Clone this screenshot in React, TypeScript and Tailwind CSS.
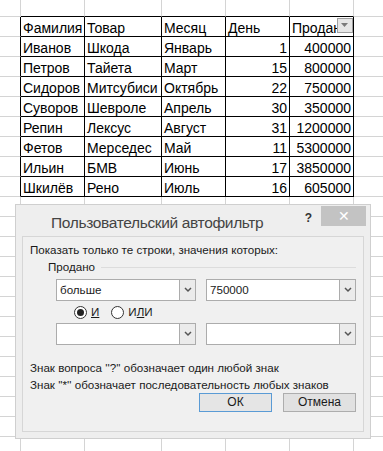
import React from "react";

const colWidths = [21, 64, 77, 64, 64, 64, 30];

const rows: string[][] = [
  ["Фамилия", "Товар", "Месяц", "День", "Продано"],
  ["Иванов", "Шкода", "Январь", "1", "400000"],
  ["Петров", "Тайета", "Март", "15", "800000"],
  ["Сидоров", "Митсубиси", "Октябрь", "22", "750000"],
  ["Суворов", "Шевроле", "Апрель", "30", "350000"],
  ["Репин", "Лексус", "Август", "31", "1200000"],
  ["Фетов", "Мерседес", "Май", "11", "5300000"],
  ["Ильин", "БМВ", "Июнь", "17", "3850000"],
  ["Шкилёв", "Рено", "Июль", "16", "605000"],
];

const ROW_COUNT = 23;
const inTableRow = (r: number) => r >= 1 && r <= 9;
const inTableCol = (c: number) => c >= 1 && c <= 5;

function Cell({ r, c }: { r: number; c: number }) {
  const rightBlack = inTableRow(r) && (inTableCol(c) || inTableCol(c + 1));
  const bottomBlack = inTableCol(c) && (inTableRow(r) || inTableRow(r + 1));
  const data = inTableRow(r) && inTableCol(c) ? rows[r - 1][c - 1] : "";
  const numeric = r > 1 && (c === 4 || c === 5);
  const isFilter = r === 1 && c === 5;

  return (
    <div
      className={`relative flex items-start overflow-hidden whitespace-nowrap border-r border-b px-[2px] pt-[4px] leading-[15px] ${
        rightBlack ? "border-r-black" : "border-r-[#d4d4d4]"
      } ${bottomBlack ? "border-b-black" : "border-b-[#d4d4d4]"} ${
        numeric ? "justify-end" : "justify-start"
      }`}
    >
      {data}
      {isFilter && (
        <div className="absolute right-0 top-[1px] flex h-[15px] w-[16px] items-center justify-center border border-[#a0a0a0] bg-[#e6e6e6]">
          <svg width="8" height="5" viewBox="0 0 8 5">
            <path d="M0 0 H7 L3.5 4 Z" fill="#7a7a7a" />
          </svg>
        </div>
      )}
    </div>
  );
}

function Combo({ value, width }: { value: string; width: string }) {
  return (
    <div className={`flex h-[22px] ${width} border border-[#acacac] bg-white`}>
      <div className="flex-1 truncate pl-[3px] leading-[20px]">{value}</div>
      <div className="flex w-[16px] items-center justify-center border-l border-[#acacac] bg-[#ebebeb]">
        <svg width="8" height="6" viewBox="0 0 8 6">
          <path d="M1 1 L4 4 L7 1" stroke="#555" strokeWidth="1.5" fill="none" />
        </svg>
      </div>
    </div>
  );
}

function Radio({ checked }: { checked: boolean }) {
  return (
    <span className="flex h-[13px] w-[13px] items-center justify-center rounded-full border border-[#333] bg-white">
      {checked && <span className="h-[7px] w-[7px] rounded-full bg-[#222]" />}
    </span>
  );
}

function AutoFilterDialog() {
  return (
    <div className="absolute left-[15px] top-[204px] flex h-[235px] w-[356px] flex-col border border-[#cfcfcf] bg-[#eeeeee] font-['Liberation_Sans',sans-serif] text-[11.6px] text-[#1a1a1a]">
      <div className="flex h-[31px] items-start">
        <div className="pl-[35px] pt-[6px] text-[15.5px] tracking-[-0.35px] text-[#444]">
          Пользовательский автофильтр
        </div>
        <div className="ml-auto pt-[4px] pr-[9px] text-[12px] font-bold text-[#333]">?</div>
        <div className="mr-[4px] mt-[1px] flex h-[20px] w-[45px] items-center justify-center bg-[#c3c3c3] text-[14px] text-white">
          ✕
        </div>
      </div>
      <div className="mx-[6px] mb-[6px] flex flex-1 flex-col border border-[#d6d6d6] bg-[#f0f0f0] px-[7px] pt-[5px]">
        <div className="leading-[16px]">Показать только те строки, значения которых:</div>
        <div className="mt-[1px] flex items-center pl-[18px] leading-[16px]">
          <span>Продано</span>
          <span className="ml-[6px] h-px flex-1 bg-[#dcdcdc]" />
        </div>
        <div className="mt-[4px] flex gap-[10px] pl-[26px]">
          <Combo value="больше" width="w-[141px]" />
          <Combo value="750000" width="w-[151px]" />
        </div>
        <div className="mt-[2px] flex h-[18px] items-center pl-[44px]">
          <Radio checked />
          <span className="ml-[4px]">
            <span className="underline">И</span>
          </span>
          <span className="ml-[12px]">
            <Radio checked={false} />
          </span>
          <span className="ml-[4px]">
            И<span className="underline">Л</span>И
          </span>
        </div>
        <div className="mt-[2px] flex gap-[10px] pl-[26px]">
          <Combo value="" width="w-[141px]" />
          <Combo value="" width="w-[151px]" />
        </div>
        <div className="mt-[15px] leading-[16px]">Знак вопроса ''?'' обозначает один любой знак</div>
        <div className="mt-[1px] leading-[16px]">Знак ''*'' обозначает последовательность любых знаков</div>
        <div className="mt-[0px] flex justify-end gap-[11px]">
          <button className="h-[19px] w-[73px] border border-[#5a9bd5] bg-[#e5e5e5] text-[12px] leading-[17px]">
            ОК
          </button>
          <button className="h-[19px] w-[73px] border border-[#adadad] bg-[#e1e1e1] text-[12px] leading-[17px]">
            Отмена
          </button>
        </div>
      </div>
    </div>
  );
}

export default function App() {
  return (
    <div className="relative h-[451px] w-[383px] overflow-hidden bg-white font-['Liberation_Sans',sans-serif] text-[14px] text-black">
      <div
        className="grid"
        style={{
          gridTemplateColumns: colWidths.map((w) => `${w}px`).join(" "),
          gridTemplateRows: `17px repeat(${ROW_COUNT - 1}, 20px)`,
        }}
      >
        {Array.from({ length: ROW_COUNT }).map((_, r) =>
          colWidths.map((_, c) => <Cell key={`${r}-${c}`} r={r} c={c} />),
        )}
      </div>
      <AutoFilterDialog />
    </div>
  );
}
